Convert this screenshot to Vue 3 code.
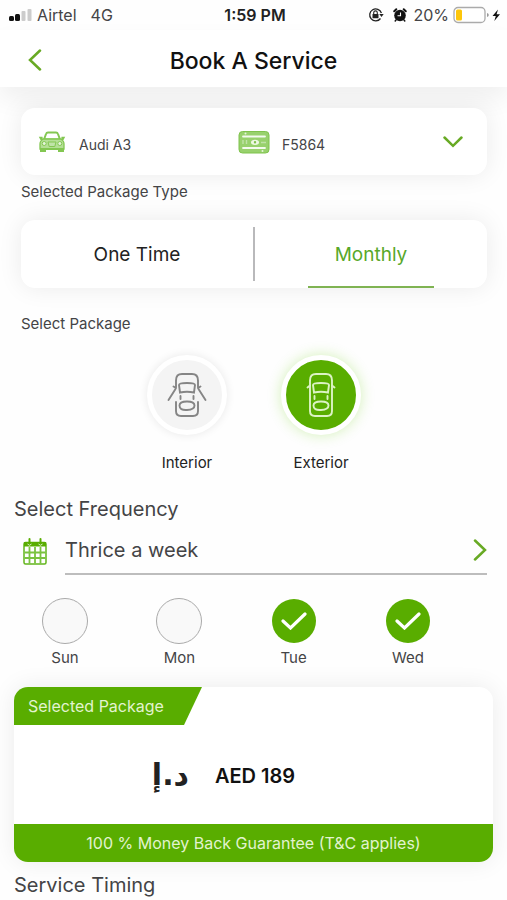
<script setup>
import { ref } from 'vue'

const plan = ref('monthly')
const pack = ref('exterior')
const days = ref([
  { name: 'Sun', on: false },
  { name: 'Mon', on: false },
  { name: 'Tue', on: true },
  { name: 'Wed', on: true },
])
</script>

<template>
  <div class="screen">
    <div class="status">
      <div class="status-side">
        <svg class="signal" viewBox="0 0 24 14" aria-hidden="true">
          <rect x="0" y="8" width="5" height="5" rx="1.5" fill="#111" />
          <rect x="6" y="6" width="5" height="7" rx="1.5" fill="#111" />
          <rect x="12.5" y="3" width="4" height="10" rx="1" fill="#ccc" />
          <rect x="18.5" y="1" width="4" height="12" rx="1" fill="#ccc" />
        </svg>
        <span class="carrier">Airtel</span>
        <span>4G</span>
      </div>
      <span class="clock">1:59 PM</span>
      <div class="status-side end">
        <svg class="lock" viewBox="0 0 16 16" aria-hidden="true">
          <path d="M12.500 11.500A6 6 0 1 1 13.400 6" fill="none" stroke="#222" stroke-width="1.300" />
          <path d="M11.300 7h4.400l-2.200 3z" fill="#222" />
          <rect x="4.500" y="7" width="6" height="4.300" rx=".5" fill="#222" />
          <path d="M5.700 7V5.700a1.800 1.800 0 0 1 3.600 0V7" fill="none" stroke="#222" stroke-width="1.100" />
        </svg>
        <svg class="alarm" viewBox="0 0 16 16" aria-hidden="true">
          <circle cx="8" cy="8.500" r="5.800" fill="#111" />
          <path d="M2.200 4.300 4.300 2.300M13.800 4.300l-2.100-2" stroke="#111" stroke-width="2" stroke-linecap="round" />
          <path d="M4 13l-.8 1M12 13l.8 1" stroke="#111" stroke-width="1.500" stroke-linecap="round" />
          <path d="M8.500 5.500v3.300H5.500" fill="none" stroke="#fff" stroke-width="1.100" />
        </svg>
        <span>20%</span>
        <svg class="battery" viewBox="0 0 48 18" aria-hidden="true">
          <rect x="1" y="1.500" width="31" height="15" rx="4" fill="#fff" stroke="#aaa" stroke-width="1.300" />
          <rect x="3" y="3.500" width="6" height="11" rx="1.500" fill="#fdc60a" />
          <path d="M34 7v4q1.800-.5 1.800-2T34 7z" fill="#999" />
          <path d="M45 3.500 39.500 10h3.300l-1.500 5 5.700-6.800h-3.400z" fill="#111" />
        </svg>
      </div>
    </div>

    <header class="header">
      <button class="back" type="button" aria-label="Back">
        <svg viewBox="0 0 14 22" aria-hidden="true"><path d="M12 1.500 2 11l10 9.500" /></svg>
      </button>
      <h1>Book A Service</h1>
    </header>

    <main>
      <section class="top">
        <button class="card vehicle" type="button">
          <span class="vehicle-part">
            <svg class="car" viewBox="0 0 28 22" aria-hidden="true">
              <path d="M6 8.500 8 3Q8.500 1.500 10 1.500h8q1.500 0 2 1.500l2 5.500z" fill="#fff" stroke="#83c752" stroke-width="2" />
              <path d="M.8 5.800h3.700L5 9H2.500zM27.200 5.800h-3.700L23 9h2.500z" fill="#83c752" />
              <path d="M5.500 8h17q3.500 1.500 3.500 5v5H2v-5q0-3.500 3.500-5z" fill="#b5df96" stroke="#83c752" stroke-width="1.300" />
              <path d="M2 17h6v4H2zM20 17h6v4h-6z" fill="#83c752" />
              <path d="M8 18h12" stroke="#83c752" stroke-width="2" />
              <circle cx="6.200" cy="12.500" r="2" fill="#e5f5db" stroke="#83c752" />
              <circle cx="21.800" cy="12.500" r="2" fill="#e5f5db" stroke="#83c752" />
              <path d="M10 11h8l-1.200 4.500h-5.600z" fill="#c0e3a8" stroke="#83c752" />
            </svg>
            <span>Audi A3</span>
          </span>
          <span class="vehicle-part plate-part">
            <svg class="plate" viewBox="0 0 32 24" aria-hidden="true">
              <rect x="1" y="1.500" width="30" height="21.500" rx="3.500" fill="#98d16d" stroke="#7fc34c" />
              <path d="M5 6.500h22M5 18h22" stroke="#f4fbef" stroke-width="1.800" stroke-linecap="round" />
              <path d="M5 10v4M8.500 10v4M23 12.500h5" stroke="#c0e3a8" stroke-width="1.400" />
              <ellipse cx="17" cy="12.300" rx="4" ry="2.600" fill="#edf8e4" />
              <circle cx="17" cy="12.300" r="1.200" fill="#7fc34c" />
              <circle cx="7.500" cy="3.500" r="1" fill="#e5f5db" />
              <circle cx="24.500" cy="21" r="1" fill="#e5f5db" />
            </svg>
            <span>F5864</span>
          </span>
          <svg class="down" viewBox="0 0 20 12" aria-hidden="true"><path d="M1.500 1.500 10 9.800l8.500-8.300" /></svg>
        </button>

        <h2>Selected Package Type</h2>
        <div class="card tabs">
          <button type="button" :class="{ active: plan === 'once' }" :aria-pressed="plan === 'once'" @click="plan = 'once'">One Time</button>
          <span class="divider"></span>
          <button type="button" :class="{ active: plan === 'monthly' }" :aria-pressed="plan === 'monthly'" @click="plan = 'monthly'">Monthly</button>
        </div>

        <h2 class="package-title">Select Package</h2>
        <div class="packages">
          <label class="package">
            <span class="disc">
              <input v-model="pack" type="radio" name="pack" value="interior">
              <svg viewBox="0 0 40 46" aria-hidden="true">
                <path d="M9 15V8.500Q9 2 15 2h10q6 0 6 6.500V15M9 30v9q0 5 5 5h12q5 0 5-5v-9" />
                <path d="M13 20.500 12 13q0-2 8-2t8 2l-1 7.500q-7-1.500-14 0z" />
                <path d="M12.500 33.500q0-4 7.500-4t7.500 4-7.500 4.500-7.500-4.500z" />
                <path d="M13.500 24v3M26.500 24v3M8.500 17 1.500 28M31.500 17l7 11M6.500 14.500 9 16M33.500 14.500 31 16" />
              </svg>
            </span>
            <span>Interior</span>
          </label>
          <label class="package">
            <span class="disc">
              <input v-model="pack" type="radio" name="pack" value="exterior">
              <svg viewBox="0 0 40 46" aria-hidden="true">
                <path d="M9 8.500Q9 2 15 2h10q6 0 6 6.500V39q0 5-5 5H14q-5 0-5-5z" />
                <path d="M13 20.500 12 13q0-2 8-2t8 2l-1 7.500q-7-1.500-14 0z" />
                <path d="M12.500 33.500q0-4 7.500-4t7.500 4-7.500 4.500-7.500-4.500z" />
                <path d="M13.500 24v3M26.500 24v3M6.500 15.500 9 13.500M33.500 15.500 31 13.500" />
              </svg>
            </span>
            <span>Exterior</span>
          </label>
        </div>
      </section>

      <section class="lower">
        <h3>Select Frequency</h3>
        <div class="frequency">
          <svg class="calendar" viewBox="0 0 24 27" aria-hidden="true">
            <rect x="1" y="4.500" width="22" height="21.500" rx="1.500" fill="#fff" stroke="#62b51b" stroke-width="1.500" />
            <path d="M1 4h22v4.500H1z" fill="#59ad00" />
            <path d="M6.500 1v5M17.500 1v5" stroke="#59ad00" stroke-width="2" stroke-linecap="round" />
            <path d="M4.500 6q2 2.500 4 0M15.500 6q2 2.500 4 0" fill="none" stroke="#d9efc8" />
            <path d="M6.500 9v16.500M12 9v16.500M17.500 9v16.500M1.500 14.500h21M1.500 20h21" stroke="#7ac23f" stroke-width="1.800" />
          </svg>
          <button type="button">
            <span>Thrice a week</span>
            <svg viewBox="0 0 14 22" aria-hidden="true"><path d="M2 1.500 12 11 2 20.500" /></svg>
          </button>
        </div>

        <div class="days">
          <label v-for="day in days" :key="day.name" class="day">
            <span class="tick">
              <input v-model="day.on" type="checkbox">
              <svg v-if="day.on" viewBox="0 0 26 18" aria-hidden="true"><path d="M2 9l7.500 7L24 2" /></svg>
            </span>
            <span>{{ day.name }}</span>
          </label>
        </div>

        <article class="offer">
          <div class="ribbon">Selected Package</div>
          <div class="price">
            <span class="currency" lang="ar" dir="rtl">د.إ</span>
            <strong>AED 189</strong>
          </div>
          <div class="guarantee">100 % Money Back Guarantee (T&amp;C applies)</div>
        </article>

        <h3 class="timing">Service Timing</h3>
      </section>
    </main>
  </div>
</template>

<style>
body {
  margin: 0;
  background: #fefefe;
}
</style>

<style scoped>
.screen {
  font-family: Inter, "Liberation Sans", sans-serif;
  color: #444446;
  overflow: hidden;
}
button {
  font: inherit;
  color: inherit;
  border: 0;
  padding: 0;
  background: none;
  cursor: pointer;
}
h1, h2, h3 {
  margin: 0;
  font-weight: 400;
}
svg {
  display: block;
  flex: none;
}
.status {
  display: grid;
  grid-template-columns: 1fr auto 1fr;
  align-items: center;
  height: 30px;
  padding: 0 6px 0 9px;
  font-size: 16px;
}
.status-side {
  display: flex;
  align-items: center;
}
.end {
  justify-content: flex-end;
}
.signal {
  width: 24px;
  height: 14px;
  margin-right: 4px;
}
.carrier {
  margin-right: 14px;
}
.clock {
  font-weight: 600;
  color: #222;
}
.lock {
  width: 16px;
  height: 16px;
  margin-right: 8px;
}
.alarm {
  width: 16px;
  height: 16px;
  margin-right: 5px;
}
.battery {
  width: 48px;
  height: 18px;
  margin-left: 4px;
}
.header {
  display: grid;
  grid-template-columns: 48px 1fr 48px;
  align-items: center;
  height: 57px;
  background: #fff;
  box-shadow: 0 12px 24px rgba(0, 0, 0, 0.06);
}
.header h1 {
  padding-top: 4px;
  line-height: 28px;
  font-size: 23px;
  font-weight: 500;
  color: #111;
  text-align: center;
}
.back {
  justify-self: end;
  padding: 8px 6px 6px;
}
.back svg,
.frequency button svg {
  width: 14px;
  height: 22px;
}
.back path,
.down path,
.frequency button path {
  fill: none;
  stroke: #68aa24;
  stroke-width: 2.5;
  stroke-linecap: round;
}
.top {
  padding: 21px 20px 0 21px;
}
.card {
  width: 100%;
  height: 67px;
  border-radius: 14px;
  background: #fff;
  box-shadow: 0 0 24px rgba(0, 0, 0, 0.08);
}
.vehicle {
  display: grid;
  grid-template-columns: 200px 1fr auto;
  align-items: center;
  padding: 0 24px 0 17px;
  font-size: 14px;
  text-align: left;
}
.vehicle-part {
  display: flex;
  align-items: center;
  gap: 13px;
}
.plate-part {
  gap: 12px;
}
.vehicle-part span {
  padding-top: 6px;
}
.car {
  width: 28px;
  height: 22px;
}
.plate {
  width: 32px;
  height: 24px;
}
.down {
  width: 20px;
  height: 12px;
}
h2 {
  font-size: 15px;
  line-height: 20px;
  padding-top: 7px;
}
.tabs {
  display: grid;
  grid-template-columns: 1fr 2px 1fr;
  align-items: stretch;
  margin-top: 18px;
  height: 68px;
  font-size: 19px;
  color: #222;
}
.tabs button {
  justify-self: center;
  width: 126px;
  padding-top: 2px;
  border-bottom: 2px solid transparent;
}
.tabs .active {
  color: #58a82a;
  border-color: #7fb352;
}
.divider {
  margin: 7px 0;
  background: #b9b9bb;
}
.package-title {
  padding-top: 26px;
}
.packages {
  display: flex;
  justify-content: center;
  gap: 54px;
  padding-top: 21px;
}
.package {
  display: flex;
  flex-direction: column;
  align-items: center;
  gap: 18px;
  width: 80px;
  font-size: 15px;
  line-height: 20px;
  color: #222;
}
.disc,
.tick {
  display: grid;
  place-items: center;
}
.disc > *,
.tick > * {
  grid-area: 1 / 1;
}
.disc input,
.tick input {
  appearance: none;
  box-sizing: border-box;
  margin: 0;
  border-radius: 50%;
  cursor: pointer;
}
.disc input {
  width: 80px;
  height: 80px;
  border: 5px solid #fff;
  background: #f4f4f4;
  box-shadow: 0 0 10px rgba(0, 0, 0, 0.09);
}
.disc input:checked {
  background: #59ad00;
  box-shadow: 0 0 14px rgba(110, 210, 20, 0.3);
}
.disc svg {
  width: 40px;
  height: 46px;
  fill: none;
  stroke: #858585;
  stroke-width: 1.9;
  stroke-linecap: round;
  pointer-events: none;
}
.disc input:checked + svg {
  stroke: #dcf3c4;
}
.lower {
  padding: 24px 14px 0;
}
h3 {
  font-size: 20px;
  line-height: 24px;
}
.frequency {
  display: flex;
  align-items: center;
  gap: 18px;
  padding: 6px 6px 0 9px;
}
.calendar {
  width: 24px;
  height: 27px;
}
.frequency button {
  display: flex;
  flex: 1;
  align-items: center;
  justify-content: space-between;
  height: 48px;
  border-bottom: 2px solid #bdbdbd;
  font-size: 20px;
}
.days {
  display: flex;
  justify-content: space-between;
  padding: 23px 62px 0 28px;
}
.day {
  display: flex;
  flex-direction: column;
  align-items: center;
  gap: 4px;
  width: 46px;
  font-size: 15px;
  line-height: 20px;
}
.tick input {
  width: 46px;
  height: 46px;
  border: 1px solid #aaa;
  background: #f9f9f9;
}
.tick input:checked {
  width: 44px;
  height: 44px;
  margin: 1px;
  border: 0;
  background: #59ad00;
}
.tick svg {
  width: 26px;
  height: 18px;
  fill: none;
  stroke: #fff;
  stroke-width: 3.2;
  stroke-linecap: round;
  pointer-events: none;
}
.offer {
  margin-top: 19px;
  border-radius: 14px;
  overflow: hidden;
  background: #fff;
  box-shadow: 0 0 24px rgba(0, 0, 0, 0.08);
}
.ribbon {
  width: 174px;
  padding-left: 14px;
  line-height: 38px;
  font-size: 16px;
  color: #e2f3cf;
  background: #59ad00;
  clip-path: polygon(0 0, 100% 0, calc(100% - 18px) 100%, 0 100%);
}
.price {
  display: flex;
  align-items: center;
  justify-content: center;
  gap: 26px;
  height: 99px;
  padding-right: 60px;
  color: #222;
}
.currency {
  font-family: "DejaVu Sans", sans-serif;
  font-size: 30px;
  font-weight: 700;
  line-height: 40px;
}
.price strong {
  padding-top: 2px;
  font-size: 20px;
  font-weight: 600;
  color: #111;
}
.guarantee {
  line-height: 38px;
  font-size: 16px;
  text-align: center;
  color: #e2f3cf;
  background: #59ad00;
}
.timing {
  padding-top: 11px;
}
</style>
